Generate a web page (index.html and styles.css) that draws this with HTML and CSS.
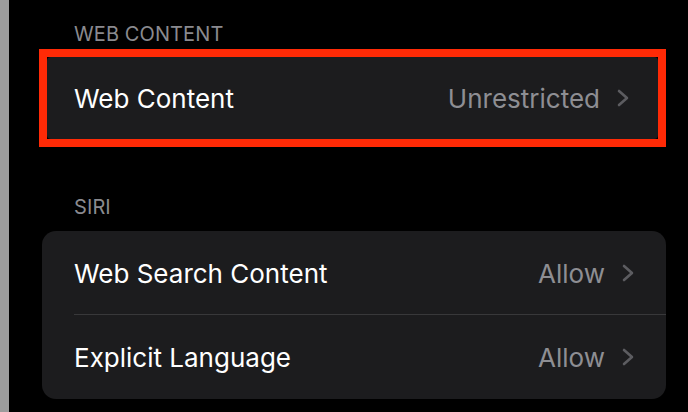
FILE: index.html
```html
<!DOCTYPE html>
<html>
<head>
<meta charset="utf-8">
<link rel="stylesheet" href="styles.css">
</head>
<body>
<div class="strip"></div>
<main class="main">
  <div class="hdr hdr-first">WEB CONTENT</div>
  <div class="highlight">
    <div class="card card-single">
      <div class="row">
        <span class="label">Web Content</span>
        <span class="value">Unrestricted</span>
        <svg class="chev" width="14" height="18" viewBox="0 0 14 18"><path d="M3 2 L11 9 L3 16" fill="none" stroke="#5c5c60" stroke-width="2.6" stroke-linecap="round" stroke-linejoin="round"/></svg>
      </div>
    </div>
  </div>
  <div class="hdr hdr-second">SIRI</div>
  <div class="card">
    <div class="row row-sep">
      <span class="label">Web Search Content</span>
      <span class="value">Allow</span>
      <svg class="chev" width="14" height="18" viewBox="0 0 14 18"><path d="M3 2 L11 9 L3 16" fill="none" stroke="#5c5c60" stroke-width="2.6" stroke-linecap="round" stroke-linejoin="round"/></svg>
    </div>
    <div class="row">
      <span class="label">Explicit Language</span>
      <span class="value">Allow</span>
      <svg class="chev" width="14" height="18" viewBox="0 0 14 18"><path d="M3 2 L11 9 L3 16" fill="none" stroke="#5c5c60" stroke-width="2.6" stroke-linecap="round" stroke-linejoin="round"/></svg>
    </div>
  </div>
</main>
</body>
</html>
```
FILE: styles.css
```css
html, body {
  margin: 0;
  padding: 0;
  background: #000;
  height: 100%;
  overflow: hidden;
}
body {
  display: flex;
  font-family: "Inter", "Liberation Sans", sans-serif;
  -webkit-font-smoothing: antialiased;
}
.strip {
  width: 9px;
  flex: none;
  background: #9c9c9c;
}
.main {
  flex: 1;
  padding: 0 27px 0 33px;
}
.hdr {
  color: #8a8a8f;
  font-size: 20px;
  line-height: 22px;
  padding-left: 32px;
  letter-spacing: 0.1px;
}
.hdr-first {
  padding-top: 23px;
  box-sizing: border-box;
  height: 49px;
}
.highlight {
  margin-left: -3px;
  width: 627px;
  border: 8px solid #ff2a06;
  box-sizing: border-box;
  height: 98px;
}
.card {
  background: #1c1c1e;
  border-radius: 14px;
  overflow: hidden;
}
.card-single {
  height: 82px;
  border-radius: 4px;
}
.card-single .row {
  height: 82px;
  padding-left: 27px;
  padding-right: 28px;
}
.hdr-second {
  padding-top: 49px;
  height: 84px;
  box-sizing: border-box;
}
.row {
  display: flex;
  align-items: center;
  height: 84px;
  padding-left: 32px;
  padding-right: 31px;
  position: relative;
  box-sizing: border-box;
}
.row-sep::after {
  content: "";
  position: absolute;
  left: 32px;
  right: 0;
  bottom: 0;
  height: 1px;
  background: #38383a;
}
.label {
  flex: 1;
  color: #fff;
  font-size: 26px;
}
.value {
  color: #8e8e93;
  font-size: 26px;
  margin-right: 16px;
}
.chev {
  flex: none;
}
```
